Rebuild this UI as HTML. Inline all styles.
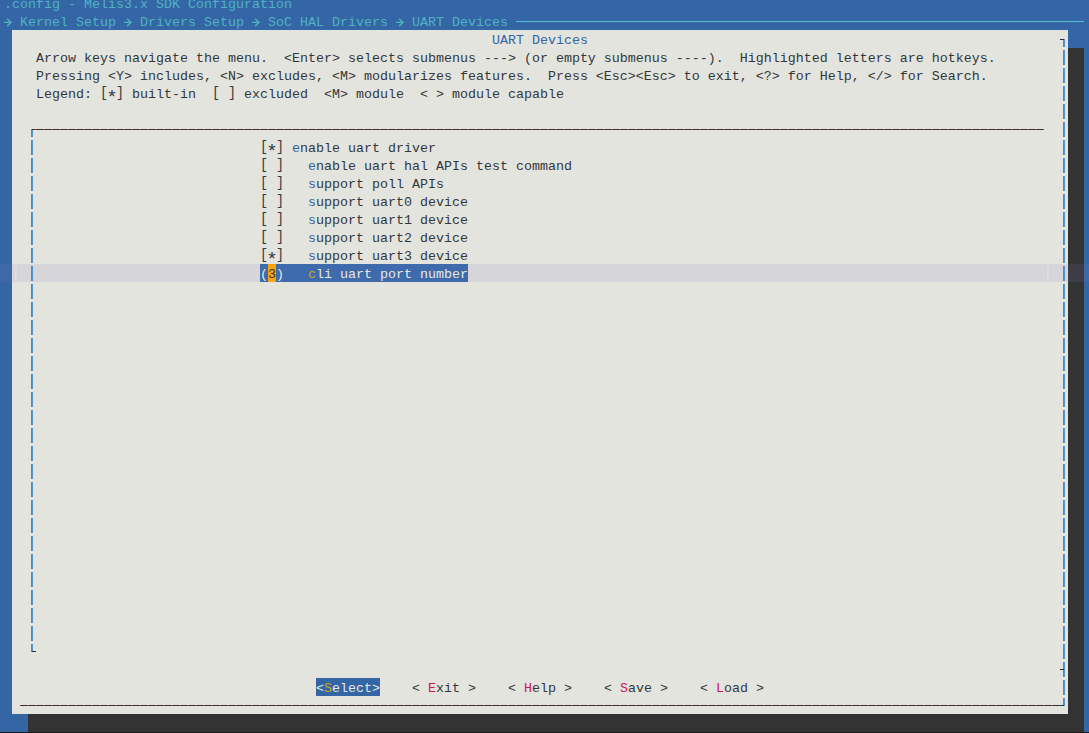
<!DOCTYPE html>
<html lang="en">
<head>
<meta charset="utf-8">
<title>UART Devices - Melis3.x SDK Configuration</title>
<style>
html,body{margin:0;padding:0;}
body{width:1089px;height:733px;overflow:hidden;background:#3465a4;}
#scr{position:relative;width:1089px;height:733px;overflow:hidden;background:#3465a4;
  font-family:"Liberation Mono","DejaVu Sans Mono",monospace;font-size:13.333px;line-height:18px;color:#32383a;}
.r{position:absolute;left:4px;height:18px;margin:0;padding:0;white-space:pre;font:inherit;}
.r span{display:inline-block;height:18px;vertical-align:top;}
i{font-style:normal;}
.as{display:inline-block;position:relative;width:8px;height:18px;vertical-align:top;}
.as b{position:absolute;left:-2px;top:3px;width:12px;text-align:center;font:normal 19px/18px "Liberation Mono",monospace;}
.br{display:inline-block;transform:translateY(-1px) scaleY(1.03);transform-origin:50% 14.8px;}
.ar{display:inline-block;position:relative;width:8px;height:18px;vertical-align:top;overflow:hidden;}
.ar b{position:absolute;left:-8.5px;top:-1.5px;font:normal 17.2px/18px "Noto Sans CJK SC",sans-serif;}
.t{position:relative;top:2px;}
.b{position:absolute;}
.v{position:absolute;width:2px;height:15px;background-image:linear-gradient(90deg,#b2732d 0,#b2732d 1px,#5494cc 1px,#5494cc 2px);}
.f{position:absolute;width:2px;height:15px;background-image:linear-gradient(90deg,#dee0de 0,#dee0de 1px,#e0dcda 1px,#e0dcda 2px);}
.hl{position:absolute;height:1px;background:#2f2f2f repeating-linear-gradient(90deg,#8c3a30 0,#8c3a30 1px,#2f2f2f 1px,#2f2f2f 7px,#2c5f96 7px,#2c5f96 8px);}
.cy{color:#4fb3c4;}
.bl{color:#3465a4;}
.rd{color:#c9175a;}
.w{color:#e8e8e3;}
.yl{color:#c6ab14;}
</style>
</head>
<body>
<div id="scr">
  <!-- back title -->
  <pre class="r cy" style="top:-6px;left:4px"><span class="t">.config - Melis3.x SDK Configuration</span></pre>
  <pre class="r cy" style="top:12px;left:4px"><span class="t"><span class="ar"><b>→</b></span> Kernel Setup <span class="ar"><b>→</b></span> Drivers Setup <span class="ar"><b>→</b></span> SoC HAL Drivers <span class="ar"><b>→</b></span> UART Devices </span></pre>
  <div class="b" style="left:516px;top:21px;width:568px;height:1px;background:#55bac8"></div>
  <!-- shadow -->
  <div class="b" style="left:1068px;top:48px;width:16px;height:684px;background:#333333"></div>
  <div class="b" style="left:28px;top:714px;width:1056px;height:18px;background:#333333"></div>
  <!-- dialog -->
  <div class="b" style="left:12px;top:30px;width:1056px;height:684px;background:#e4e4de"></div>
  <!-- cursor line band -->
  <div class="b" style="left:0px;top:264px;width:1089px;height:18px;background:rgba(128,128,200,0.14)"></div>
  <!-- box lines -->
  <div class="v" style="left:31px;top:129px;height:8px"></div>
  <div class="v" style="left:31px;top:140px"></div>
  <div class="v" style="left:31px;top:158px"></div>
  <div class="v" style="left:31px;top:176px"></div>
  <div class="v" style="left:31px;top:194px"></div>
  <div class="v" style="left:31px;top:212px"></div>
  <div class="v" style="left:31px;top:230px"></div>
  <div class="v" style="left:31px;top:248px"></div>
  <div class="v" style="left:31px;top:266px"></div>
  <div class="v" style="left:31px;top:284px"></div>
  <div class="v" style="left:31px;top:302px"></div>
  <div class="v" style="left:31px;top:320px"></div>
  <div class="v" style="left:31px;top:338px"></div>
  <div class="v" style="left:31px;top:356px"></div>
  <div class="v" style="left:31px;top:374px"></div>
  <div class="v" style="left:31px;top:392px"></div>
  <div class="v" style="left:31px;top:410px"></div>
  <div class="v" style="left:31px;top:428px"></div>
  <div class="v" style="left:31px;top:446px"></div>
  <div class="v" style="left:31px;top:464px"></div>
  <div class="v" style="left:31px;top:482px"></div>
  <div class="v" style="left:31px;top:500px"></div>
  <div class="v" style="left:31px;top:518px"></div>
  <div class="v" style="left:31px;top:536px"></div>
  <div class="v" style="left:31px;top:554px"></div>
  <div class="v" style="left:31px;top:572px"></div>
  <div class="v" style="left:31px;top:590px"></div>
  <div class="v" style="left:31px;top:608px"></div>
  <div class="v" style="left:31px;top:626px"></div>
  <div class="v" style="left:31px;top:644px;height:8px"></div>
  <div class="v" style="left:1063px;top:39px;height:8px"></div>
  <div class="v" style="left:1063px;top:50px"></div>
  <div class="v" style="left:1063px;top:68px"></div>
  <div class="v" style="left:1063px;top:86px"></div>
  <div class="v" style="left:1063px;top:104px"></div>
  <div class="v" style="left:1063px;top:122px"></div>
  <div class="v" style="left:1063px;top:140px"></div>
  <div class="v" style="left:1063px;top:158px"></div>
  <div class="v" style="left:1063px;top:176px"></div>
  <div class="v" style="left:1063px;top:194px"></div>
  <div class="v" style="left:1063px;top:212px"></div>
  <div class="v" style="left:1063px;top:230px"></div>
  <div class="v" style="left:1063px;top:248px"></div>
  <div class="v" style="left:1063px;top:266px"></div>
  <div class="v" style="left:1063px;top:284px"></div>
  <div class="v" style="left:1063px;top:302px"></div>
  <div class="v" style="left:1063px;top:320px"></div>
  <div class="v" style="left:1063px;top:338px"></div>
  <div class="v" style="left:1063px;top:356px"></div>
  <div class="v" style="left:1063px;top:374px"></div>
  <div class="v" style="left:1063px;top:392px"></div>
  <div class="v" style="left:1063px;top:410px"></div>
  <div class="v" style="left:1063px;top:428px"></div>
  <div class="v" style="left:1063px;top:446px"></div>
  <div class="v" style="left:1063px;top:464px"></div>
  <div class="v" style="left:1063px;top:482px"></div>
  <div class="v" style="left:1063px;top:500px"></div>
  <div class="v" style="left:1063px;top:518px"></div>
  <div class="v" style="left:1063px;top:536px"></div>
  <div class="v" style="left:1063px;top:554px"></div>
  <div class="v" style="left:1063px;top:572px"></div>
  <div class="v" style="left:1063px;top:590px"></div>
  <div class="v" style="left:1063px;top:608px"></div>
  <div class="v" style="left:1063px;top:626px"></div>
  <div class="v" style="left:1063px;top:644px"></div>
  <div class="v" style="left:1063px;top:662px"></div>
  <div class="v" style="left:1063px;top:680px"></div>
  <div class="v" style="left:1063px;top:698px;height:8px"></div>
  <div class="hl" style="left:36px;top:129px;width:1008px"></div>
  <div class="b" style="left:32px;top:129px;width:3px;height:1px;background:#2f2f2f"></div>
  <div class="b" style="left:35px;top:129px;width:1px;height:1px;background:#2c5f96"></div>
  <div class="b" style="left:32px;top:651px;width:4px;height:1px;background:#2f2f2f"></div>
  <div class="b" style="left:1060px;top:39px;width:4px;height:1px;background:#2f2f2f"></div>
  <div class="b" style="left:1060px;top:669px;width:4px;height:1px;background:#2f2f2f"></div>
  <div class="hl" style="left:20px;top:705px;width:1040px"></div>
  <div class="b" style="left:1060px;top:705px;width:4px;height:1px;background:#2f2f2f"></div>
  <div class="f" style="left:15px;top:266px"></div>
  <div class="f" style="left:1047px;top:266px"></div>
  <!-- title -->
  <pre class="r bl" style="top:30px;left:492px"><span class="t">UART Devices</span></pre>
  <!-- help text -->
  <pre class="r" style="top:48px;left:36px"><span class="t">Arrow keys navigate the menu.  &lt;Enter&gt; selects submenus ---&gt; (or empty submenus ----).  Highlighted letters are hotkeys.</span></pre>
  <pre class="r" style="top:66px;left:36px"><span class="t">Pressing &lt;Y&gt; includes, &lt;N&gt; excludes, &lt;M&gt; modularizes features.  Press &lt;Esc&gt;&lt;Esc&gt; to exit, &lt;?&gt; for Help, &lt;/&gt; for Search.</span></pre>
  <pre class="r" style="top:84px;left:36px"><span class="t">Legend: <i class="br">[</i><i class="as"><b>*</b></i><i class="br">]</i> built-in  <i class="br">[</i> <i class="br">]</i> excluded  &lt;M&gt; module  &lt; &gt; module capable</span></pre>
  <!-- menu items -->
  <pre class="r" style="top:138px;left:260px"><span class="t"><i class="br">[</i><i class="as"><b>*</b></i><i class="br">]</i> <i class="bl">e</i>nable uart driver</span></pre>
  <pre class="r" style="top:156px;left:260px"><span class="t"><i class="br">[</i> <i class="br">]</i>   <i class="bl">e</i>nable uart hal APIs test command</span></pre>
  <pre class="r" style="top:174px;left:260px"><span class="t"><i class="br">[</i> <i class="br">]</i>   <i class="bl">s</i>upport poll APIs</span></pre>
  <pre class="r" style="top:192px;left:260px"><span class="t"><i class="br">[</i> <i class="br">]</i>   <i class="bl">s</i>upport uart0 device</span></pre>
  <pre class="r" style="top:210px;left:260px"><span class="t"><i class="br">[</i> <i class="br">]</i>   <i class="bl">s</i>upport uart1 device</span></pre>
  <pre class="r" style="top:228px;left:260px"><span class="t"><i class="br">[</i> <i class="br">]</i>   <i class="bl">s</i>upport uart2 device</span></pre>
  <pre class="r" style="top:246px;left:260px"><span class="t"><i class="br">[</i><i class="as"><b>*</b></i><i class="br">]</i>   <i class="bl">s</i>upport uart3 device</span></pre>
  <!-- selected item -->
  <div class="b" style="left:260px;top:264px;width:208px;height:18px;background:#3f6aac"></div>
  <div class="b" style="left:268px;top:264px;width:8px;height:18px;background:#fba30a"></div>
  <pre class="r w" style="top:264px;left:260px"><span class="t">(<i style="color:#2e3436">3</i>)   <i class="yl">c</i>li uart port number</span></pre>
  <!-- buttons -->
  <div class="b" style="left:316px;top:678px;width:64px;height:18px;background:#3465a4"></div>
  <pre class="r w" style="top:678px;left:316px"><span class="t">&lt;<i class="yl">S</i>elect&gt;</span></pre>
  <pre class="r" style="top:678px;left:412px"><span class="t">&lt; <i class="rd">E</i>xit &gt;</span></pre>
  <pre class="r" style="top:678px;left:508px"><span class="t">&lt; <i class="rd">H</i>elp &gt;</span></pre>
  <pre class="r" style="top:678px;left:604px"><span class="t">&lt; <i class="rd">S</i>ave &gt;</span></pre>
  <pre class="r" style="top:678px;left:700px"><span class="t">&lt; <i class="rd">L</i>oad &gt;</span></pre>
  <!-- bottom black line -->
  <div class="b" style="left:0px;top:732px;width:1089px;height:1px;background:#1c1c1c"></div>
</div>
</body>
</html>
